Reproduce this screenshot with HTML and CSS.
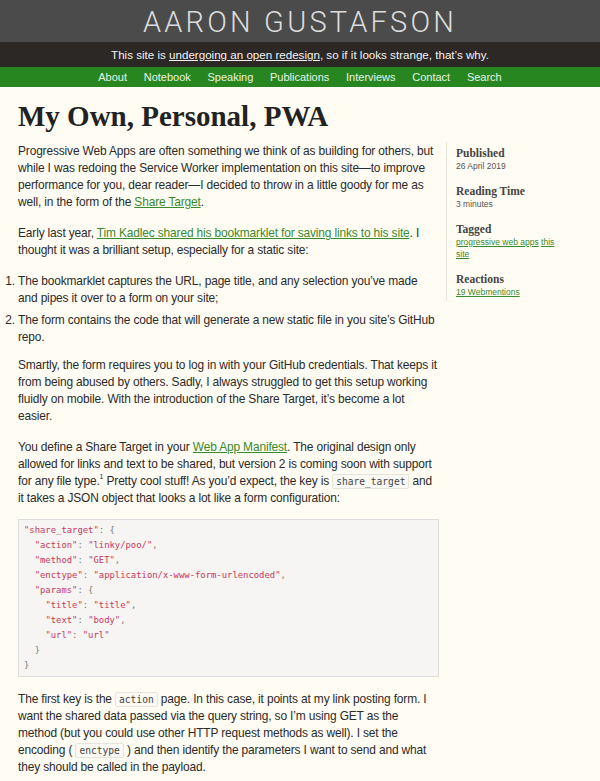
FILE: index.html
```html
<!DOCTYPE html>
<html lang="en">
<head>
<meta charset="utf-8">
<title>My Own, Personal, PWA</title>
<link rel="stylesheet" href="styles.css">
</head>
<body>
<header class="masthead">
  <div class="site-title">AARON GUSTAFSON</div>
  <div class="banner">This site is <a href="#">undergoing an open redesign</a>, so if it looks strange, that’s why.</div>
  <nav class="nav">
    <a href="#">About</a>
    <a href="#">Notebook</a>
    <a href="#">Speaking</a>
    <a href="#">Publications</a>
    <a href="#">Interviews</a>
    <a href="#">Contact</a>
    <a href="#">Search</a>
  </nav>
</header>
<main class="page">
  <h1 class="title">My Own, Personal, PWA</h1>
  <div class="layout">
    <article class="content">
      <p>Progressive Web Apps are often something we think of as building for others, but while I was redoing the Service Worker implementation on this site—to improve performance for you, dear reader—I decided to throw in a little goody for me as well, in the form of the <a href="#">Share Target</a>.</p>
      <p>Early last year, <a href="#">Tim Kadlec shared his bookmarklet for saving links to his site</a>. I thought it was a brilliant setup, especially for a static site:</p>
      <ol class="steps">
        <li>The bookmarklet captures the URL, page title, and any selection you’ve made and pipes it over to a form on your site;</li>
        <li>The form contains the code that will generate a new static file in you site’s GitHub repo.</li>
      </ol>
      <p>Smartly, the form requires you to log in with your GitHub credentials. That keeps it from being abused by others. Sadly, I always struggled to get this setup working fluidly on mobile. With the introduction of the Share Target, it’s become a lot easier.</p>
      <p>You define a Share Target in your <a href="#">Web App Manifest</a>. The original design only allowed for links and text to be shared, but version 2 is coming soon with support for any file type.<sup class="fn">1</sup> Pretty cool stuff! As you’d expect, the key is <code class="inline">share_target</code> and it takes a JSON object that looks a lot like a form configuration:</p>
      <div class="code">
        <span class="ln"><span class="s">"share_target"</span>: {</span>
        <span class="ln">  <span class="s">"action"</span>: <span class="s">"linky/poo/"</span>,</span>
        <span class="ln">  <span class="s">"method"</span>: <span class="s">"GET"</span>,</span>
        <span class="ln">  <span class="s">"enctype"</span>: <span class="s">"application/x-www-form-urlencoded"</span>,</span>
        <span class="ln">  <span class="s">"params"</span>: {</span>
        <span class="ln">    <span class="s">"title"</span>: <span class="s">"title"</span>,</span>
        <span class="ln">    <span class="s">"text"</span>: <span class="s">"body"</span>,</span>
        <span class="ln">    <span class="s">"url"</span>: <span class="s">"url"</span></span>
        <span class="ln">  }</span>
        <span class="ln">}</span>
      </div>
      <p>The first key is the <code class="inline">action</code> page. In this case, it points at my link posting form. I want the shared data passed via the query string, so I’m using GET as the method (but you could use other HTTP request methods as well). I set the encoding ( <code class="inline">enctype</code> ) and then identify the parameters I want to send and what they should be called in the payload.</p>
    </article>
    <aside class="meta">
      <div class="meta-item">
        <h2>Published</h2>
        <div class="meta-value">26 April 2019</div>
      </div>
      <div class="meta-item">
        <h2>Reading Time</h2>
        <div class="meta-value">3 minutes</div>
      </div>
      <div class="meta-item">
        <h2>Tagged</h2>
        <div class="meta-value"><a href="#">progressive web apps</a> <a href="#">this site</a></div>
      </div>
      <div class="meta-item">
        <h2>Reactions</h2>
        <div class="meta-value"><a href="#">19 Webmentions</a></div>
      </div>
    </aside>
  </div>
</main>
</body>
</html>
```

FILE: styles.css
```css
html, body {
  margin: 0;
  padding: 0;
}
body {
  background: #fffcf3;
  color: #2b2b2b;
  font-family: "Liberation Sans", Arial, sans-serif;
  font-size: 11.95px;
  line-height: 17px;
}
a {
  color: #3a8a2e;
}
.masthead {
  text-align: center;
}
.site-title {
  background: #4b4b4b;
  color: #dcdcdc;
  font-family: Roboto, "Liberation Sans", sans-serif;
  font-weight: 300;
  font-size: 29px;
  letter-spacing: 3.2px;
  height: 42px;
  line-height: 44px;
}
.banner {
  background: #2b2826;
  color: #f2f2f2;
  font-size: 11.6px;
  height: 25px;
  line-height: 26px;
}
.banner a {
  color: #f2f2f2;
}
.nav {
  background: #27861f;
  height: 20px;
  display: flex;
  justify-content: center;
  gap: 16.7px;
  line-height: 20px;
  font-size: 11px;
}
.nav a {
  color: #e8f3e6;
  text-decoration: none;
}
.page {
  padding: 0 10px 0 18px;
}
.title {
  font-family: "Liberation Serif", serif;
  font-weight: 700;
  font-size: 29px;
  line-height: 36px;
  margin: 11px 0 9px;
  color: #222;
}
.layout {
  display: flex;
  gap: 7px;
  align-items: flex-start;
}
.content {
  width: 421px;
  flex: none;
  letter-spacing: -0.15px;
}
.content p {
  margin: 0 0 14px;
}
.steps {
  margin: 0 0 11px;
  padding-left: 0;
}
.steps li {
  margin-bottom: 5px;
}
.fn {
  font-size: 7px;
  line-height: 0;
  vertical-align: 6px;
}
.inline, .code {
  font-family: "DejaVu Sans Mono", "Liberation Mono", monospace;
  letter-spacing: 0;
}
.inline {
  font-size: 9.6px;
  background: #fbf9f4;
  border: 1px solid #e7e4dc;
  border-radius: 2px;
  padding: 1px 3px;
  color: #444;
}
.code {
  margin: -2px 0 14px;
  background: #f6f5f3;
  border: 1px solid #dcdcdc;
  padding: 3px 5px;
  font-size: 8.9px;
  line-height: 15px;
  color: #777;
}
.code .ln {
  display: block;
  white-space: pre;
}
.code .s {
  color: #c8385a;
}
.meta {
  border-left: 1px solid #e6e2d8;
  padding: 4px 0 3px 9px;
  width: 108px;
  flex: none;
  margin-top: -1px;
}
.meta-item {
  margin-bottom: 12px;
}
.meta-item:last-child {
  margin-bottom: 0;
}
.meta h2 {
  font-family: "Liberation Serif", serif;
  font-weight: 700;
  font-size: 11.5px;
  line-height: 14px;
  margin: 0;
  color: #444;
}
.meta-value {
  font-size: 8.5px;
  line-height: 12px;
  color: #555;
}
```
